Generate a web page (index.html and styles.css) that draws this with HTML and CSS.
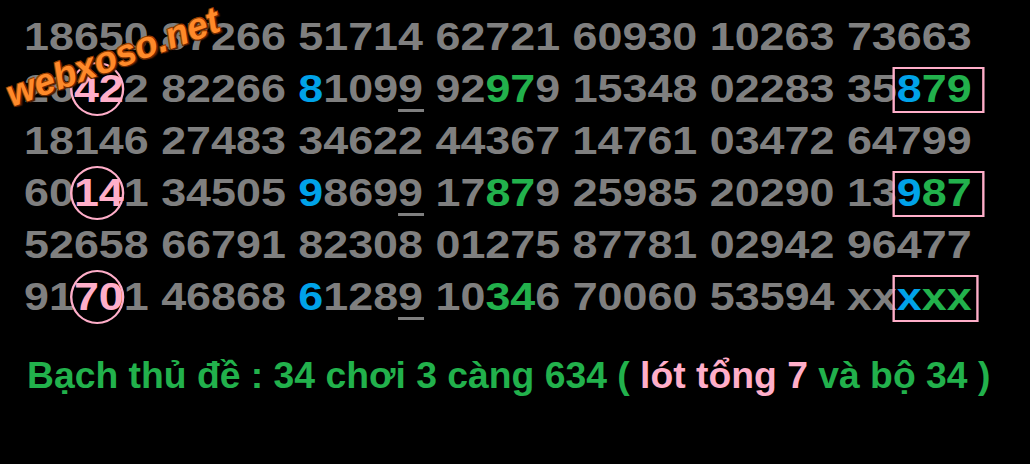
FILE: index.html
```html
<!DOCTYPE html>
<html lang="vi">
<head>
<meta charset="utf-8">
<link rel="stylesheet" href="styles.css">
</head>
<body>
<div class="board">
  <div class="grid">
    <div class="row">18650 87266 51714 62721 60930 10263 73663</div>
    <div class="row">26<span class="ring">42</span>2 82266 <span class="b">8</span>109<span class="ul">9</span> 92<span class="g">97</span>9 15348 02283 35<span class="box"><span class="b">8</span><span class="g">79</span></span></div>
    <div class="row">18146 27483 34622 44367 14761 03472 64799</div>
    <div class="row">60<span class="ring">14</span>1 34505 <span class="b">9</span>869<span class="ul">9</span> 17<span class="g">87</span>9 25985 20290 13<span class="box"><span class="b">9</span><span class="g">87</span></span></div>
    <div class="row">52658 66791 82308 01275 87781 02942 96477</div>
    <div class="row">91<span class="ring">70</span>1 46868 <span class="b">6</span>128<span class="ul">9</span> 10<span class="g">34</span>6 70060 53594 xx<span class="box boxx"><span class="b">x</span><span class="g">xx</span></span></div>
  </div>
  <p class="note">Bạch thủ đề : 34 chơi 3 càng 634 ( <span class="pk">lót tổng 7</span> và bộ 34 )</p>
  <div class="mark">webxoso.net</div>
</div>
</body>
</html>
```
FILE: styles.css
```css
html, body {
  margin: 0;
  padding: 0;
  background: #000;
}
.board {
  position: relative;
  width: 1030px;
  height: 464px;
  overflow: hidden;
  font-family: "Liberation Sans", Arial, sans-serif;
  font-weight: bold;
}
.grid {
  padding: 11px 0 0 24px;
}
.row {
  font-size: 38px;
  line-height: 52px;
  color: #7f7f7f;
  white-space: pre;
  transform: scaleX(1.18);
  transform-origin: 0 0;
}
.b { color: #00a2e8; }
.g { color: #22b14c; }
.ring {
  position: relative;
  color: #ffaec9;
}
.ring::after {
  content: "";
  position: absolute;
  box-sizing: border-box;
  left: -3px;
  top: -6px;
  width: 46px;
  height: 54px;
  border: 2px solid #ffaec9;
  border-radius: 50%;
}
.ul { position: relative; }
.ul::after {
  content: "";
  position: absolute;
  left: 0;
  top: 41px;
  width: 22px;
  height: 3px;
  background: #7f7f7f;
}
.box { position: relative; }
.box::after {
  content: "";
  position: absolute;
  box-sizing: border-box;
  left: -3.5px;
  top: -1px;
  width: 78px;
  height: 46px;
  border: 2px solid #ffaec9;
}
.boxx::after {
  left: -4px;
  width: 73px;
  height: 47px;
}
.note {
  margin: 30px 0 0 27px;
  font-size: 37.3px;
  line-height: 44px;
  color: #22b14c;
  white-space: pre;
}
.pk { color: #ffaec9; }
.mark {
  position: absolute;
  left: 12px;
  top: 77px;
  line-height: 36px;
  font-size: 37px;
  font-style: italic;
  font-weight: bold;
  font-family: "Liberation Sans", Arial, sans-serif;
  color: #ff8a2a;
  transform: rotate(-20deg);
  transform-origin: 0 30.5px;
  text-shadow: 1px 1px 0 #6e2a00, -1px -1px 0 #9a3d00, 1px -1px 0 #9a3d00, -1px 1px 0 #6e2a00, 2px 2px 1px #3a1500;
}
```
